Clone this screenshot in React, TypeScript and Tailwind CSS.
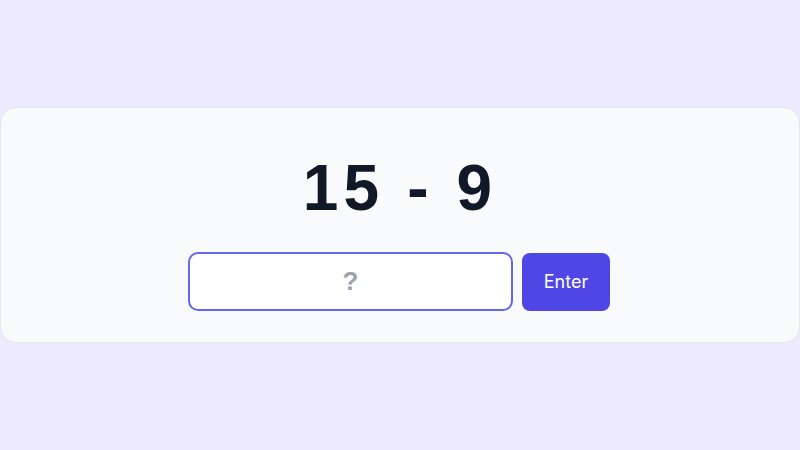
import React, { useState } from 'react';

const App: React.FC = () => {
  const [answer, setAnswer] = useState('');

  return (
    <div className="min-h-screen bg-[#ede9fe] flex items-center font-['Inter',sans-serif]">
      <div className="w-full bg-[#f8fafc] border border-[#e5e7eb] rounded-2xl px-8 pt-8 pb-[31px] flex flex-col items-center">
        <h1 className="text-[64px] leading-[96px] font-bold tracking-[0.08em] text-[#111827] font-['Liberation_Sans',Arial,sans-serif] mb-4">
          15 - 9
        </h1>
        <form
          className="flex items-center gap-[9px] pr-[2px]"
          onSubmit={(e) => {
            e.preventDefault();
            setAnswer('');
          }}
        >
          <input
            type="text"
            value={answer}
            onChange={(e) => setAnswer(e.target.value)}
            placeholder="?"
            className="w-[325px] h-[59px] rounded-[10px] border-2 border-[#6366f1] bg-white text-center text-[26px] font-bold text-[#111827] placeholder:text-[#9ca3af] outline-none font-['Liberation_Sans',Arial,sans-serif]"
          />
          <button
            type="submit"
            className="w-[88px] h-[58px] rounded-lg bg-[#4f46e5] text-white text-lg"
          >
            Enter
          </button>
        </form>
      </div>
    </div>
  );
};

export default App;
